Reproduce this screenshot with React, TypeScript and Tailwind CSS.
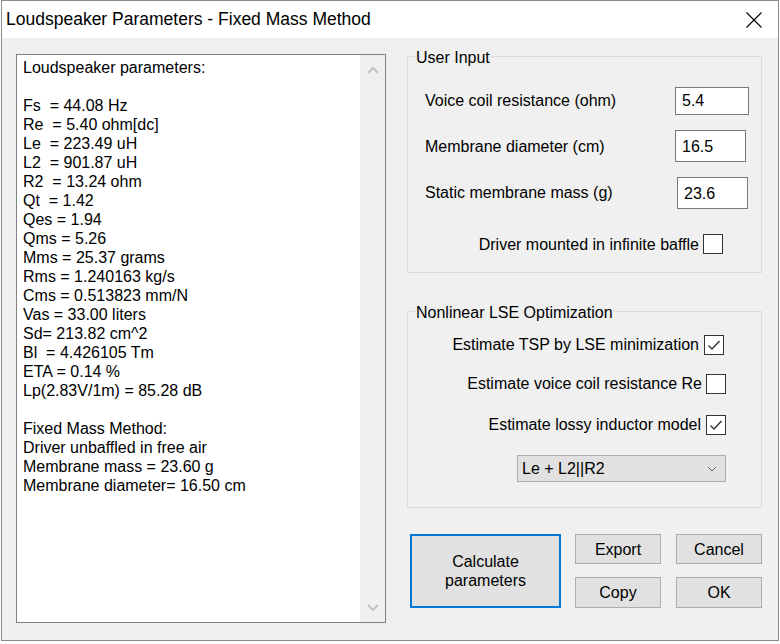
import React from 'react';

const resultLines = [
    'Loudspeaker parameters:',
    '',
    'Fs  = 44.08 Hz',
    'Re  = 5.40 ohm[dc]',
    'Le  = 223.49 uH',
    'L2  = 901.87 uH',
    'R2  = 13.24 ohm',
    'Qt  = 1.42',
    'Qes = 1.94',
    'Qms = 5.26',
    'Mms = 25.37 grams',
    'Rms = 1.240163 kg/s',
    'Cms = 0.513823 mm/N',
    'Vas = 33.00 liters',
    'Sd= 213.82 cm^2',
    'Bl  = 4.426105 Tm',
    'ETA = 0.14 %',
    'Lp(2.83V/1m) = 85.28 dB',
    '',
    'Fixed Mass Method:',
    'Driver unbaffled in free air',
    'Membrane mass = 23.60 g',
    'Membrane diameter= 16.50 cm',
];

function CheckBox({ checked }: { checked?: boolean }) {
    return (
        <span className="flex h-[20px] w-[20px] shrink-0 items-center justify-center border border-[#333333] bg-white">
            {checked && (
                <svg width="14" height="12" viewBox="0 0 14 12" fill="none">
                    <path d="M1.5 6.5 L5 10 L12.5 2" stroke="#333333" strokeWidth="1.4" />
                </svg>
            )}
        </span>
    );
}

function GroupBox({ label, className, children }: { label: string; className: string; children: React.ReactNode }) {
    return (
        <div className={`relative border border-[#dcdcdc] ${className}`}>
            <span className="absolute left-[7px] top-[-9px] bg-[#f0f0f0] px-[1px] leading-[19px]">{label}</span>
            {children}
        </div>
    );
}

function Button({ children, className }: { children: React.ReactNode; className: string }) {
    return (
        <button className={`flex items-center justify-center border border-[#adadad] bg-[#e1e1e1] text-[16px] leading-[19px] text-black ${className}`}>
            {children}
        </button>
    );
}

export default function App() {
    return (
        <div
            className="h-[644px] w-[780px] overflow-hidden bg-white text-[16px] text-black"
            style={{ fontFamily: '"Liberation Sans", Arial, sans-serif' }}
        >
            <div className="ml-px flex h-[641px] w-[778px] flex-col border border-[#8a8a8a] bg-[#f0f0f0]">
                {/* title bar */}
                <div className="flex h-[37px] shrink-0 items-center justify-between bg-white pl-[4px] pr-[16px]">
                    <span className="text-[17.5px]">Loudspeaker Parameters - Fixed Mass Method</span>
                    <svg width="16" height="16" viewBox="0 0 16 16" className="mt-[1px]">
                        <path d="M0.5 0.5 L15.5 15.5 M15.5 0.5 L0.5 15.5" stroke="#000" strokeWidth="1.1" />
                    </svg>
                </div>

                <div className="flex flex-1">
                    {/* results text box */}
                    <div className="ml-[14px] mt-[16px] flex h-[569px] w-[370px] border border-[#828282] bg-white">
                        <div className="flex-1 whitespace-pre pl-[6px] pt-[3px] leading-[19px]">
                            {resultLines.map((line, i) => (
                                <div key={i} className="h-[19px]">{line}</div>
                            ))}
                        </div>
                        <div className="flex w-[25px] flex-col items-center justify-between bg-[#f0f0f0] pb-[10px] pt-[11px]">
                            <svg width="12" height="8" viewBox="0 0 12 8">
                                <path d="M1 7 L6 2 L11 7" stroke="#c2c2c2" strokeWidth="2" fill="none" />
                            </svg>
                            <svg width="12" height="8" viewBox="0 0 12 8">
                                <path d="M1 1 L6 6 L11 1" stroke="#c2c2c2" strokeWidth="2" fill="none" />
                            </svg>
                        </div>
                    </div>

                    {/* right column */}
                    <div className="ml-[21px] mt-[18px] flex w-[355px] flex-col">
                        <GroupBox label="User Input" className="h-[217px]">
                            <div className="flex flex-col pl-[17px] pt-[30px]">
                                <div className="flex h-[28px] items-center justify-between">
                                    <span>Voice coil resistance (ohm)</span>
                                    <div className="mr-[12px] flex h-[28px] w-[74px] items-center border border-[#7a7a7a] bg-white pl-[6px]">5.4</div>
                                </div>
                                <div className="mt-[15px] flex h-[32px] items-center justify-between">
                                    <span className="mt-[2px]">Membrane diameter (cm)</span>
                                    <div className="mr-[15px] flex h-[32px] w-[71px] items-start border border-[#7a7a7a] bg-white pl-[6px] pt-[4px]">16.5</div>
                                </div>
                                <div className="mt-[15px] flex h-[32px] items-center justify-between">
                                    <span>Static membrane mass (g)</span>
                                    <div className="mr-[13px] flex h-[32px] w-[71px] items-start border border-[#7a7a7a] bg-white pl-[6px] pt-[4px]">23.6</div>
                                </div>
                                <div className="mt-[25px] flex h-[20px] items-center justify-end gap-[4px] pr-[38px]">
                                    <span className="mt-[1px]">Driver mounted in infinite baffle</span>
                                    <CheckBox />
                                </div>
                            </div>
                        </GroupBox>

                        <GroupBox label="Nonlinear LSE Optimization" className="mt-[38px] h-[197px]">
                            <div className="flex flex-col items-end pt-[23px]">
                                <div className="flex h-[20px] items-center gap-[5px] pr-[37px]">
                                    <span>Estimate TSP by LSE minimization</span>
                                    <CheckBox checked />
                                </div>
                                <div className="mt-[19px] flex h-[20px] items-center gap-[4px] pr-[35px]">
                                    <span>Estimate voice coil resistance Re</span>
                                    <CheckBox />
                                </div>
                                <div className="mt-[21px] flex h-[20px] items-center gap-[5px] pr-[35px]">
                                    <span>Estimate lossy inductor model</span>
                                    <CheckBox checked />
                                </div>
                                <div className="mr-[35px] mt-[20px] flex h-[27px] w-[209px] items-center justify-between border border-[#adadad] bg-[#e1e1e1] pl-[4px] pr-[8px]">
                                    <span>Le + L2||R2</span>
                                    <svg width="10" height="6" viewBox="0 0 10 6">
                                        <path d="M1 1 L5 5 L9 1" stroke="#606060" strokeWidth="1" fill="none" />
                                    </svg>
                                </div>
                            </div>
                        </GroupBox>

                        <div className="ml-[3px] mt-[26px] flex gap-[14px]">
                            <button className="flex h-[74px] w-[151px] flex-col items-center justify-center border-2 border-[#0078d7] bg-[#e1e1e1] text-[16px] leading-[19px]">
                                <span>Calculate</span>
                                <span>parameters</span>
                            </button>
                            <div className="grid grid-cols-[86px_86px] gap-x-[15px] gap-y-[12px]">
                                <Button className="h-[30px]">Export</Button>
                                <Button className="h-[30px]">Cancel</Button>
                                <Button className="h-[31px]">Copy</Button>
                                <Button className="h-[31px]">OK</Button>
                            </div>
                        </div>
                    </div>
                </div>
            </div>
        </div>
    );
}
